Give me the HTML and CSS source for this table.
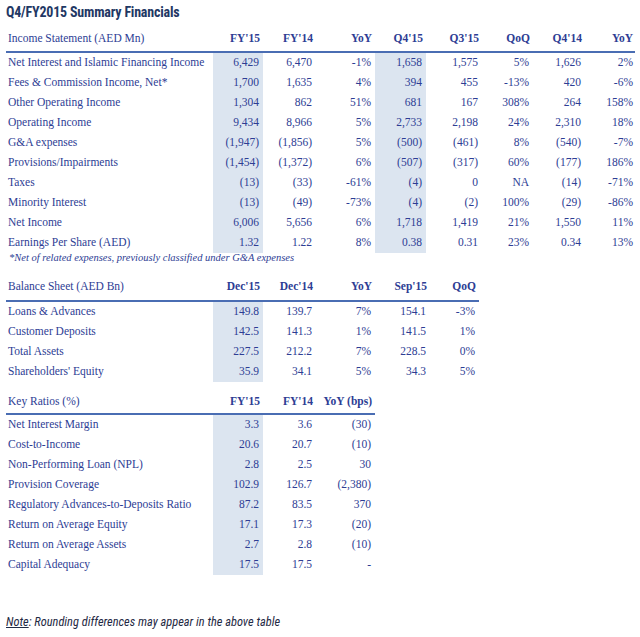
FILE: index.html
```html
<!DOCTYPE html>
<html>
<head>
<meta charset="utf-8">
<link rel="stylesheet" href="styles.css">
</head>
<body>
<div class="page">
  <h1 class="title">Q4/FY2015 Summary Financials</h1>

  <table class="fin t-income">
    <colgroup>
      <col class="c-label"><col class="c-a"><col class="c-b"><col class="c-c"><col class="c-d"><col class="c-e"><col class="c-f"><col class="c-g"><col class="c-h">
    </colgroup>
    <thead>
      <tr><th class="lbl">Income Statement (AED Mn)</th><th>FY'15</th><th>FY'14</th><th>YoY</th><th>Q4'15</th><th>Q3'15</th><th>QoQ</th><th>Q4'14</th><th>YoY</th></tr>
    </thead>
    <tbody>
      <tr><td class="lbl">Net Interest and Islamic Financing Income</td><td class="sh">6,429</td><td>6,470</td><td>-1%</td><td class="sh">1,658</td><td>1,575</td><td>5%</td><td>1,626</td><td>2%</td></tr>
      <tr><td class="lbl">Fees &amp; Commission Income, Net*</td><td class="sh">1,700</td><td>1,635</td><td>4%</td><td class="sh">394</td><td>455</td><td>-13%</td><td>420</td><td>-6%</td></tr>
      <tr><td class="lbl">Other Operating Income</td><td class="sh">1,304</td><td>862</td><td>51%</td><td class="sh">681</td><td>167</td><td>308%</td><td>264</td><td>158%</td></tr>
      <tr><td class="lbl">Operating Income</td><td class="sh">9,434</td><td>8,966</td><td>5%</td><td class="sh">2,733</td><td>2,198</td><td>24%</td><td>2,310</td><td>18%</td></tr>
      <tr><td class="lbl">G&amp;A expenses</td><td class="sh">(1,947)</td><td>(1,856)</td><td>5%</td><td class="sh">(500)</td><td>(461)</td><td>8%</td><td>(540)</td><td>-7%</td></tr>
      <tr><td class="lbl">Provisions/Impairments</td><td class="sh">(1,454)</td><td>(1,372)</td><td>6%</td><td class="sh">(507)</td><td>(317)</td><td>60%</td><td>(177)</td><td>186%</td></tr>
      <tr><td class="lbl">Taxes</td><td class="sh">(13)</td><td>(33)</td><td>-61%</td><td class="sh">(4)</td><td>0</td><td>NA</td><td>(14)</td><td>-71%</td></tr>
      <tr><td class="lbl">Minority Interest</td><td class="sh">(13)</td><td>(49)</td><td>-73%</td><td class="sh">(4)</td><td>(2)</td><td>100%</td><td>(29)</td><td>-86%</td></tr>
      <tr><td class="lbl">Net Income</td><td class="sh">6,006</td><td>5,656</td><td>6%</td><td class="sh">1,718</td><td>1,419</td><td>21%</td><td>1,550</td><td>11%</td></tr>
      <tr><td class="lbl">Earnings Per Share (AED)</td><td class="sh">1.32</td><td>1.22</td><td>8%</td><td class="sh">0.38</td><td>0.31</td><td>23%</td><td>0.34</td><td>13%</td></tr>
    </tbody>
  </table>
  <p class="footnote">*Net of related expenses, previously classified under G&amp;A expenses</p>

  <table class="fin t-balance">
    <colgroup>
      <col class="c-label"><col class="c-a"><col class="c-b"><col class="c-c"><col class="c-d2"><col class="c-e2">
    </colgroup>
    <thead>
      <tr><th class="lbl">Balance Sheet (AED Bn)</th><th>Dec'15</th><th>Dec'14</th><th>YoY</th><th>Sep'15</th><th>QoQ</th></tr>
    </thead>
    <tbody>
      <tr><td class="lbl">Loans &amp; Advances</td><td class="sh">149.8</td><td>139.7</td><td>7%</td><td>154.1</td><td>-3%</td></tr>
      <tr><td class="lbl">Customer Deposits</td><td class="sh">142.5</td><td>141.3</td><td>1%</td><td>141.5</td><td>1%</td></tr>
      <tr><td class="lbl">Total Assets</td><td class="sh">227.5</td><td>212.2</td><td>7%</td><td>228.5</td><td>0%</td></tr>
      <tr><td class="lbl">Shareholders' Equity</td><td class="sh">35.9</td><td>34.1</td><td>5%</td><td>34.3</td><td>5%</td></tr>
    </tbody>
  </table>

  <table class="fin t-ratios">
    <colgroup>
      <col class="c-label"><col class="c-a"><col class="c-b"><col class="c-c">
    </colgroup>
    <thead>
      <tr><th class="lbl">Key Ratios (%)</th><th>FY'15</th><th>FY'14</th><th>YoY (bps)</th></tr>
    </thead>
    <tbody>
      <tr><td class="lbl">Net Interest Margin</td><td class="sh">3.3</td><td>3.6</td><td>(30)</td></tr>
      <tr><td class="lbl">Cost-to-Income</td><td class="sh">20.6</td><td>20.7</td><td>(10)</td></tr>
      <tr><td class="lbl">Non-Performing Loan (NPL)</td><td class="sh">2.8</td><td>2.5</td><td>30</td></tr>
      <tr><td class="lbl">Provision Coverage</td><td class="sh">102.9</td><td>126.7</td><td>(2,380)</td></tr>
      <tr><td class="lbl">Regulatory Advances-to-Deposits Ratio</td><td class="sh">87.2</td><td>83.5</td><td>370</td></tr>
      <tr><td class="lbl">Return on Average Equity</td><td class="sh">17.1</td><td>17.3</td><td>(20)</td></tr>
      <tr><td class="lbl">Return on Average Assets</td><td class="sh">2.7</td><td>2.8</td><td>(10)</td></tr>
      <tr><td class="lbl">Capital Adequacy</td><td class="sh">17.5</td><td>17.5</td><td>-</td></tr>
    </tbody>
  </table>

  <p class="note"><span class="u">Note</span>: Rounding differences may appear in the above table</p>
</div>
</body>
</html>
```

FILE: styles.css
```css
html, body {
  margin: 0;
  padding: 0;
  background: #ffffff;
}

.page {
  padding: 4px 0 0 6px;
  width: 634px;
}

.title {
  margin: 0;
  font-family: "Roboto", "Open Sans", sans-serif;
  font-stretch: 80%;
  font-weight: bold;
  font-size: 14px;
  line-height: 17px;
  letter-spacing: -0.2px;
  color: #1f3864;
}

.fin {
  border-collapse: separate;
  border-spacing: 0;
  table-layout: fixed;
  font-family: "Liberation Serif", "Times New Roman", serif;
  font-size: 11.5px;
  color: #2d3d94;
}

.t-income { width: 629px; margin-top: 6px; }
.t-balance { width: 473px; margin-top: 11px; }
.t-ratios { width: 369px; margin-top: 5px; }

.c-label { width: 207px; }
.c-a { width: 50px; }
.c-b { width: 53px; }
.c-c { width: 59px; }
.t-income .c-d { width: 51px; }
.t-income .c-e { width: 56px; }
.t-income .c-f { width: 51px; }
.t-income .c-g { width: 52px; }
.t-income .c-h { width: 50px; }
.c-d2 { width: 55px; }
.c-e2 { width: 49px; }

.fin th {
  height: 22px;
  padding: 0 3px 2px 0;
  line-height: 14px;
  text-align: right;
  font-weight: bold;
  border-bottom: 2px solid #4a6db3;
  white-space: nowrap;
  vertical-align: middle;
}

.t-balance th {
  height: 24px;
}

.t-ratios th {
  padding-top: 3px;
  height: 21px;
}

.fin th.lbl {
  text-align: left;
  font-weight: normal;
  padding-left: 2px;
}

.fin td {
  height: 17px;
  padding: 0 4px 3px 0;
  line-height: 14px;
  text-align: right;
  white-space: nowrap;
  vertical-align: middle;
}

.fin td.lbl {
  text-align: left;
  padding-left: 2px;
}

.fin td.sh {
  background: #dce5f0;
}

.t-income th:last-child,
.t-income td:last-child { padding-right: 2px; }

.footnote {
  margin: 0;
  padding-left: 3px;
  font-family: "Liberation Serif", "Times New Roman", serif;
  font-style: italic;
  font-size: 10.5px;
  line-height: 10px;
  color: #2d3d94;
}

.note {
  margin: 40px 0 0 0;
  font-family: "Roboto", "Open Sans", sans-serif;
  font-stretch: 80%;
  font-style: italic;
  font-size: 12.4px;
  line-height: 14px;
  color: #1f2a44;
}

.note .u {
  text-decoration: underline;
}
```
